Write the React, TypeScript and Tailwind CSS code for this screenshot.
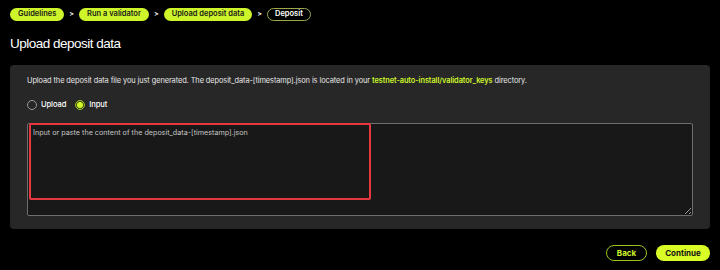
import React, { useState } from 'react';

const steps = ['Guidelines', 'Run a validator', 'Upload deposit data'];

const Radio: React.FC<{ label: string; checked: boolean; onClick: () => void }> = ({ label, checked, onClick }) => (
  <button type="button" onClick={onClick} className="flex items-center gap-[4px] text-[7.6px] font-medium tracking-[-0.1px] text-white">
    {checked ? (
      <span className="flex h-[10px] w-[10px] items-center justify-center rounded-full border border-[#9fc21e] bg-[#3d4a12]">
        <span className="h-[6px] w-[6px] rounded-full bg-[#d4f92a]" />
      </span>
    ) : (
      <span className="h-[10px] w-[10px] rounded-full border border-[#9a9a9a]" />
    )}
    {label}
  </button>
);

export default function App() {
  const [mode, setMode] = useState<'upload' | 'input'>('input');

  return (
    <div className="h-[270px] w-[720px] overflow-hidden bg-black px-[10px] pt-[7px] font-['Inter',sans-serif] text-white">
      <nav className="flex h-[14px] items-center gap-[5px] text-[7.5px] font-semibold">
        {steps.map((s) => (
          <React.Fragment key={s}>
            <span className="flex h-[13px] items-center rounded-full bg-[#cdf52a] px-[8px] text-[#1a1a1a]">{s}</span>
            <span className="text-[7px] text-white">&gt;</span>
          </React.Fragment>
        ))}
        <span className="flex h-[13px] items-center rounded-full border border-[#9ba84a] px-[7px] text-white">Deposit</span>
      </nav>

      <h1 className="mt-[14px] font-['Liberation_Sans',sans-serif] text-[13.5px] font-normal leading-[18px] tracking-[-0.5px]">
        Upload deposit data
      </h1>

      <div className="mt-[12px] rounded-[4px] bg-[#272727] px-[17px] pb-[13px] pt-[10px]">
        <p className="text-[7.4px] leading-[12px] tracking-[-0.08px] text-[#e8e8e8]">
          Upload the deposit data file you just generated. The deposit_data-[timestamp].json is located in your{' '}
          <span className="font-semibold text-[#cdf52a]">testnet-auto-install/validator_keys</span> directory.
        </p>

        <div className="mt-[12px] flex items-center gap-[9px]">
          <Radio label="Upload" checked={mode === 'upload'} onClick={() => setMode('upload')} />
          <Radio label="Input" checked={mode === 'input'} onClick={() => setMode('input')} />
        </div>

        <div className="relative mt-[13px]">
          <textarea
            placeholder="Input or paste the content of the deposit_data-[timestamp].json"
            className="block h-[93px] w-full resize rounded-[2px] border border-[#6e6e6e] bg-[#181818] px-[5px] py-[3px] text-[7.2px] leading-[12px] text-white outline-none placeholder:text-[#c4c4c4]"
          />
          <div className="pointer-events-none absolute left-[2px] top-[0px] h-[77px] w-[342px] rounded-[2px] border-2 border-[#e5393f]" />
        </div>
      </div>

      <div className="mt-[16px] flex justify-end gap-[9px]">
        <button className="flex h-[16px] w-[41px] items-center justify-center rounded-full border border-[#9cc21f] text-[8px] font-bold text-[#cdf52a]">
          Back
        </button>
        <button className="flex h-[16px] w-[54px] items-center justify-center rounded-full bg-[#d9fb26] text-[8px] font-bold text-[#141414]">
          Continue
        </button>
      </div>
    </div>
  );
}
